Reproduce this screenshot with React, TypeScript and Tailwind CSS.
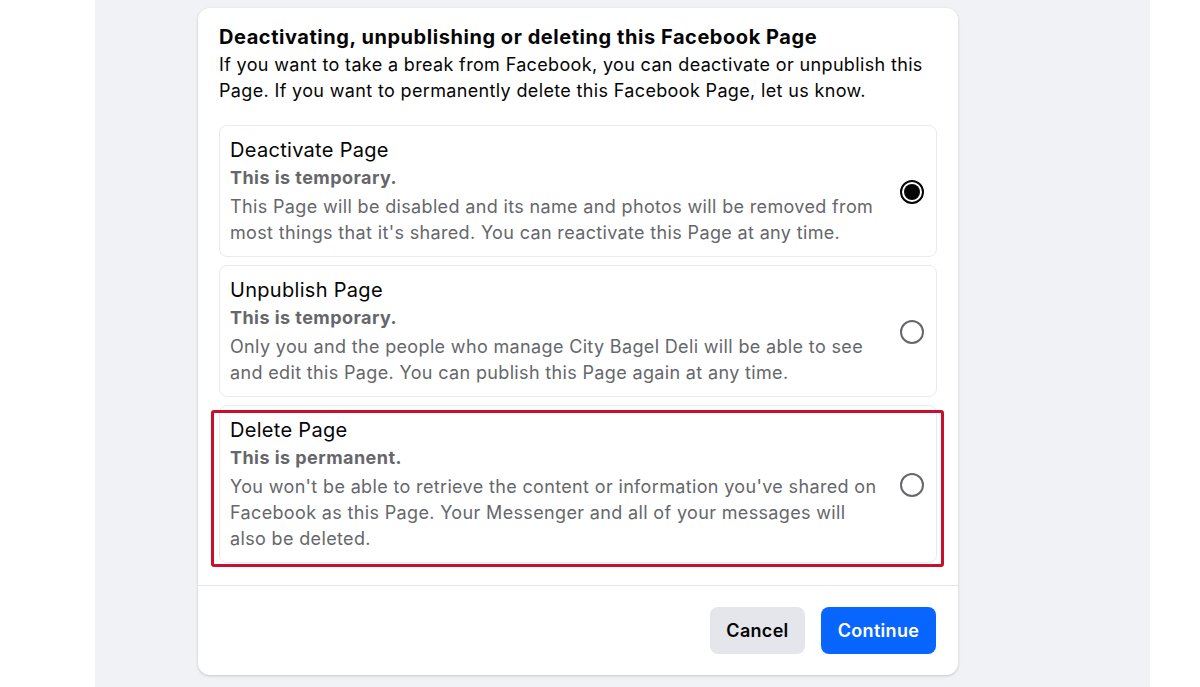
import React from 'react';

interface Option {
  id: string;
  title: string;
  note: string;
  description: string;
}

const options: Option[] = [
  {
    id: 'deactivate',
    title: 'Deactivate Page',
    note: 'This is temporary.',
    description:
      "This Page will be disabled and its name and photos will be removed from most things that it's shared. You can reactivate this Page at any time.",
  },
  {
    id: 'unpublish',
    title: 'Unpublish Page',
    note: 'This is temporary.',
    description:
      'Only you and the people who manage City Bagel Deli will be able to see and edit this Page. You can publish this Page again at any time.',
  },
  {
    id: 'delete',
    title: 'Delete Page',
    note: 'This is permanent.',
    description:
      "You won't be able to retrieve the content or information you've shared on Facebook as this Page. Your Messenger and all of your messages will also be deleted.",
  },
];

function Radio({ checked }: { checked: boolean }) {
  if (checked) {
    return (
      <div className="w-6 h-6 rounded-full border-2 border-[#050505] flex items-center justify-center">
        <div className="w-4 h-4 rounded-full bg-[#050505]" />
      </div>
    );
  }
  return <div className="w-6 h-6 rounded-full border-2 border-[#65676b]" />;
}

function OptionRow({ option, checked, highlighted }: { option: Option; checked: boolean; highlighted: boolean }) {
  return (
    <div className="relative">
      <div className="flex items-center border border-[#e9eaed] rounded-lg pl-[10px] pr-[12px] pt-[11px] pb-[10px]">
        <div className="w-[652px]">
          <div className="text-[20px] leading-[26px] tracking-[0.3px] text-[#050505]">{option.title}</div>
          <div className="mt-[2px] text-[18px] leading-[26px] font-bold tracking-[0.45px] text-[#65676b]">
            {option.note}
          </div>
          <div className="mt-[3px] text-[18px] leading-[26px] tracking-[0.35px] text-[#65676b]">
            {option.description}
          </div>
        </div>
        <div className="ml-auto">
          <Radio checked={checked} />
        </div>
      </div>
      {highlighted && (
        <div className="absolute left-[-8px] right-[-7px] top-[5px] bottom-[-4px] border-[3px] border-[#c8102e] rounded-[3px] pointer-events-none" />
      )}
    </div>
  );
}

export default function App() {
  return (
    <div
      className="w-[1200px] h-[687px] bg-white overflow-hidden"
      style={{ fontFamily: 'Inter, "Noto Sans", sans-serif' }}
    >
      <div className="ml-[95px] w-[1055px] h-full bg-[#f1f2f6] pt-2">
        <div className="ml-[103px] w-[760px] bg-white rounded-xl shadow-[0_1px_3px_rgba(0,0,0,0.18)]">
          <div className="px-[21px] pt-[17px] pb-[22px]">
            <h1 className="text-[20px] leading-6 font-bold tracking-[0.55px] text-[#050505]">
              Deactivating, unpublishing or deleting this Facebook Page
            </h1>
            <p className="mt-[3px] text-[18px] leading-[26px] tracking-[0.35px] text-[#050505]">
              If you want to take a break from Facebook, you can deactivate or unpublish this Page. If you want to
              permanently delete this Facebook Page, let us know.
            </p>
            <div className="mt-[21px] flex flex-col gap-2">
              {options.map((o, i) => (
                <OptionRow key={o.id} option={o} checked={i === 0} highlighted={o.id === 'delete'} />
              ))}
            </div>
          </div>
          <div className="border-t border-[#e4e6eb] px-[22px] pt-[21px] pb-[21px] flex justify-end gap-4">
            <button className="h-[47px] w-[95px] rounded-lg bg-[#e4e6eb] text-[18px] font-semibold tracking-[0.3px] text-[#050505]">
              Cancel
            </button>
            <button className="h-[47px] w-[115px] rounded-lg bg-[#0866ff] text-[18px] font-semibold tracking-[0.3px] text-white">
              Continue
            </button>
          </div>
        </div>
      </div>
    </div>
  );
}
